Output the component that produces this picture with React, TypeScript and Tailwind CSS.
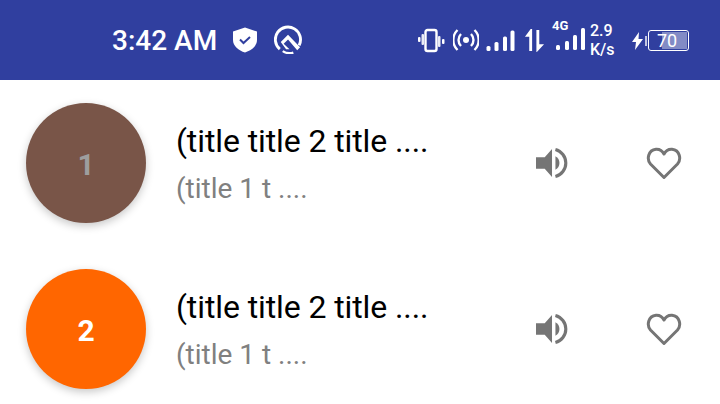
const roboto = "font-['Roboto',sans-serif]"

function StatusBar() {
  return (
    <div className={`h-20 bg-[#303f9f] flex items-center text-white ${roboto}`}>
      <span className="ml-[112px] w-[105px] text-[28px] leading-8 font-medium whitespace-nowrap mt-[1px]">3:42 AM</span>
      {/* shield */}
      <svg className="ml-[15px] mt-[-1px]" width="26" height="26" viewBox="0 0 25 26">
        <path d="M12.5 0.5 L24.5 4.5 V13 C24.5 19 19 23.5 12.5 25.5 C6 23.5 0.5 19 0.5 13 V4.5 Z" fill="#fff" />
        <path d="M7.5 12.5 L11 16 L17.5 10" fill="none" stroke="#303f9f" strokeWidth="2" />
      </svg>
      {/* q logo */}
      <svg className="ml-[16px] mt-[-1px]" width="29" height="29" viewBox="0 0 30 30">
        <path d="M26 21 A13 13 0 1 0 6 25" fill="none" stroke="#fff" strokeWidth="3" />
        <path d="M9 27 A13 13 0 0 0 20 28.5" fill="none" stroke="#fff" strokeWidth="2.4" />
        <path d="M7 17.5 L14.5 10 L27 23 L24 26 L14.5 15 L10 19.5 L16 25 H12.5 Z" fill="#fff" />
      </svg>
      {/* vibrate */}
      <svg className="ml-[114px]" width="28" height="26" viewBox="0 0 28 26">
        <rect x="8.5" y="3" width="11" height="21" rx="2" fill="none" stroke="#fff" strokeWidth="2.4" />
        <rect x="1" y="10" width="2.5" height="5" rx="1" fill="#fff" />
        <rect x="4.5" y="7" width="2.5" height="11" rx="1" fill="#fff" opacity="0.9" />
        <rect x="21" y="9" width="2.5" height="11" rx="1" fill="#fff" opacity="0.9" />
        <rect x="25" y="12" width="2.5" height="5" rx="1" fill="#fff" />
      </svg>
      {/* hotspot */}
      <svg className="ml-[8px]" width="26" height="24" viewBox="0 0 26 24">
        <circle cx="13" cy="12" r="3" fill="#fff" />
        <path d="M8 6 A8.5 8.5 0 0 0 8 18 M18 6 A8.5 8.5 0 0 1 18 18" fill="none" stroke="#fff" strokeWidth="2.4" />
        <path d="M4.5 2 A14 14 0 0 0 4.5 22 M21.5 2 A14 14 0 0 1 21.5 22" fill="none" stroke="#fff" strokeWidth="2.4" />
      </svg>
      {/* signal 1 */}
      <svg className="ml-[7px] mt-[2px]" width="29" height="22" viewBox="0 0 29 22">
        <rect x="0.5" y="16" width="4" height="5" rx="1.5" fill="#fff" />
        <rect x="8.5" y="12" width="4" height="9" rx="1.5" fill="#fff" />
        <rect x="17" y="6.5" width="4" height="14.5" rx="1.5" fill="#fff" />
        <rect x="24.5" y="0.5" width="4" height="20.5" rx="1.5" fill="#fff" />
      </svg>
      {/* up down arrows */}
      <svg className="ml-[9px]" width="21" height="25" viewBox="0 0 22 26">
        <path d="M7 1 L1 9 H5.5 V24 H8.5 V1 Z" fill="#fff" />
        <path d="M13 2 H16 V17 H21 L13.5 25 H13 Z" fill="#fff" />
      </svg>
      {/* 4G signal */}
      <div className="relative ml-[7px] mt-[-4px] w-[33px] h-[32px]">
        <span className="absolute left-0 top-[-4px] text-[13px] leading-4 font-bold">4G</span>
        <svg className="absolute left-0 top-0" width="33" height="32" viewBox="0 0 33 32">
          <rect x="4" y="23" width="4" height="5" rx="1.5" fill="#fff" />
          <rect x="13" y="19" width="4" height="9" rx="1.5" fill="#fff" />
          <rect x="21" y="13" width="4" height="15" rx="1.5" fill="#fff" />
          <rect x="29" y="6" width="4" height="22" rx="1.5" fill="#fff" />
        </svg>
      </div>
      <div className="ml-[5px] w-[36px] text-[16px] leading-[19px] font-medium mt-[-1px] whitespace-nowrap">
        <div>2.9</div>
        <div>K/s</div>
      </div>
      {/* bolt */}
      <svg className="ml-[6px] mt-[1px]" width="11" height="18" viewBox="0 0 11 18">
        <path d="M7 0 L0 10 H4 L3 18 L11 7 H6.5 Z" fill="#fff" />
      </svg>
      {/* battery */}
      <div className="ml-[2px] mt-[1px] flex items-center">
        <div className="w-[2px] h-[10px] bg-white/70" />
        <div className="relative ml-[1px] w-[41px] h-[21px] rounded-[3px] border-[1.5px] border-white overflow-hidden flex items-center">
          <div className="absolute right-[1px] top-[1px] bottom-[1px] w-[25px] bg-white/40" />
          <span className="relative ml-[8px] text-[18px] leading-none">70</span>
        </div>
      </div>
    </div>
  )
}

function Row({ num, bg, numColor }: { num: string; bg: string; numColor: string }) {
  return (
    <div className={`h-[166px] flex items-center pl-[26px] ${roboto}`}>
      <div className={`w-[120px] h-[120px] rounded-full flex items-center justify-center text-[30px] font-bold shadow-[0_3px_8px_rgba(0,0,0,0.22)] ${bg} ${numColor}`}>
        <span className="mt-[3px]">{num}</span>
      </div>
      <div className="ml-[30px] w-[354px] mt-[2px]">
        <div className="text-[32px] leading-[34px] text-black whitespace-nowrap tracking-[-0.1px]">(title title 2 title ....</div>
        <div className="mt-[16px] text-[28px] leading-[30px] text-[#808080] whitespace-nowrap">(title 1 t ....</div>
      </div>
      <svg className="ml-[6px]" width="33" height="32" viewBox="0 0 34 32">
        <path d="M0 10 H9 L16.5 1.5 V30.5 L9 22 H0 Z" fill="#757575" />
        <path d="M20 9 A8 8 0 0 1 20 23 Z" fill="#757575" />
        <path d="M20 2 A14.5 14.5 0 0 1 20 30" fill="none" stroke="#757575" strokeWidth="3.2" />
      </svg>
      <svg className="ml-[77px]" width="36" height="33" viewBox="0 0 36 33">
        <path d="M18 30.5 L4.5 17 C0.5 12.5 2 3 10 2.2 C13.5 2 16.5 4 18 7 C19.5 4 22.5 2 26 2.2 C34 3 35.5 12.5 31.5 17 Z" fill="none" stroke="#757575" strokeWidth="3" strokeLinejoin="round" />
      </svg>
    </div>
  )
}

export default function App() {
  return (
    <div className="w-[720px] h-[404px] bg-white overflow-hidden">
      <StatusBar />
      <Row num="1" bg="bg-[#795548]" numColor="text-[#9e9e9e]" />
      <Row num="2" bg="bg-[#ff6600]" numColor="text-white" />
    </div>
  )
}
